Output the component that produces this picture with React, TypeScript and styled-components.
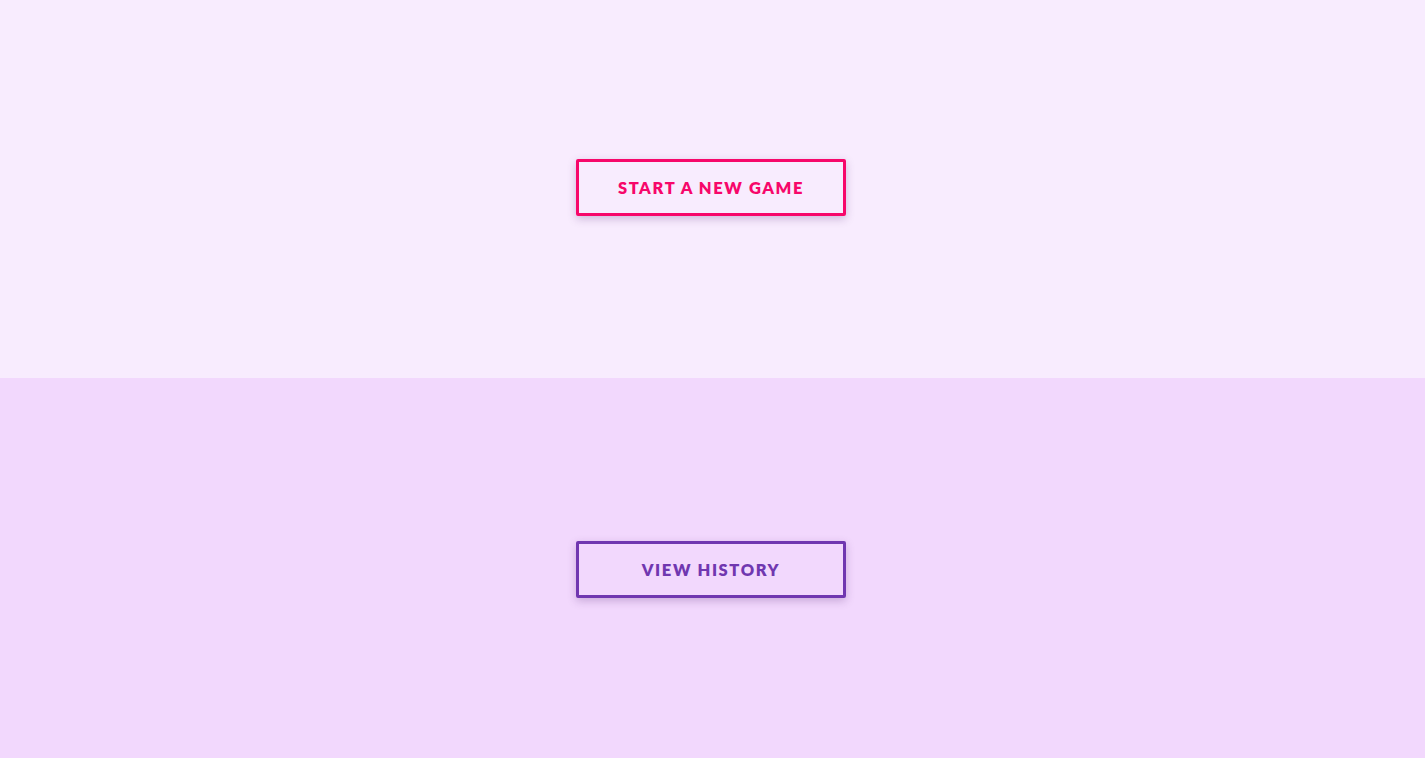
import React from "react";
import styled, { createGlobalStyle } from "styled-components";

const Global = createGlobalStyle`
  html, body { margin: 0; padding: 0; }
  body { font-family: Lato, "Open Sans", sans-serif; }
`;

const Page = styled.div`
  display: flex;
  flex-direction: column;
  height: 758px;
  width: 100%;
`;

const Half = styled.section<{ $bg: string; $top?: boolean }>`
  flex: ${(p) => (p.$top ? "0 0 378px" : "1")};
  box-sizing: border-box;
  display: flex;
  align-items: center;
  justify-content: center;
  padding-right: 3px;
  padding-bottom: ${(p) => (p.$top ? "3px" : "0")};
  padding-top: ${(p) => (p.$top ? "0" : "3px")};
  background: ${(p) => p.$bg};
`;

const Button = styled.button<{ $color: string }>`
  width: 270px;
  height: 57px;
  box-sizing: border-box;
  background: transparent;
  border: 3px solid ${(p) => p.$color};
  border-radius: 2px;
  color: ${(p) => p.$color};
  font-family: Lato, "Open Sans", sans-serif;
  font-weight: 800;
  font-size: 16.5px;
  letter-spacing: 1.6px;
  text-transform: uppercase;
  box-shadow: 0 3px 8px rgba(80, 30, 110, 0.25);
  cursor: pointer;
  padding: 0;
`;

export default function App() {
  return (
    <>
      <Global />
      <Page>
        <Half $bg="#f8ecfe" $top>
          <Button $color="#f7076a">Start a new game</Button>
        </Half>
        <Half $bg="#f2d8fd">
          <Button $color="#7037b0">View history</Button>
        </Half>
      </Page>
    </>
  );
}
